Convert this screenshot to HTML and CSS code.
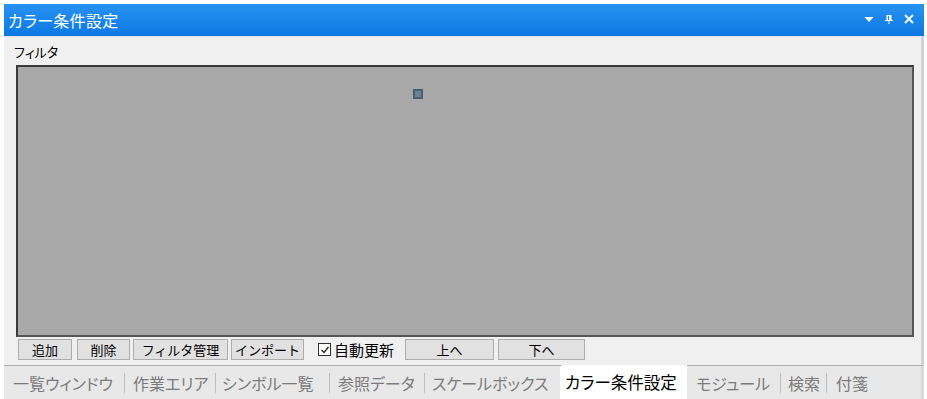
FILE: index.html
```html
<!DOCTYPE html>
<html lang="ja">
<head>
  <meta charset="UTF-8">
  <meta name="viewport" content="width=device-width, initial-scale=1.0">
  <title>カラー条件設定</title>
  <link rel="stylesheet" href="styles.css">
</head>
<body>

  <div class="window">

    <div class="titlebar">
      <span class="title">カラー条件設定</span>
      <div class="title-tools">
        <svg class="tool" width="10" height="10" viewBox="0 0 10 10">
          <path d="M0.5 3 L9.5 3 L5 8 Z" fill="#fff"/>
        </svg>
        <svg class="tool" width="10" height="10" viewBox="0 0 10 10">
          <path d="M2.5 1 H7.5 V6 H9 V7 H5.5 V10 H4.5 V7 H1 V6 H2.5 Z M4 2 V6 H5 V2 Z" fill="#fff" fill-rule="evenodd"/>
        </svg>
        <svg class="tool" width="10" height="10" viewBox="0 0 10 10">
          <path d="M1 1 L9 9 M9 1 L1 9" stroke="#fff" stroke-width="1.8"/>
        </svg>
      </div>
    </div>

    <div class="panel">
      <div class="group-label">フィルタ</div>
      <div class="filter-view">
        <span class="marker"></span>
      </div>
      <div class="toolbar">
        <button class="btn btn-add">追加</button>
        <button class="btn btn-del">削除</button>
        <button class="btn btn-manage">フィルタ管理</button>
        <button class="btn btn-import">インポート</button>
        <label class="check">
          <span class="check-box">
            <svg width="10" height="10" viewBox="0 0 10 10">
              <path d="M1.5 5 L4 7.5 L8.5 2" fill="none" stroke="#222" stroke-width="1.3"/>
            </svg>
          </span>
          自動更新
        </label>
        <button class="btn btn-up">上へ</button>
        <button class="btn btn-down">下へ</button>
      </div>
    </div>

    <div class="tabs">
      <span class="tab tab-list">一覧ウィンドウ</span>
      <span class="sep"></span>
      <span class="tab tab-work">作業エリア</span>
      <span class="sep"></span>
      <span class="tab tab-symbol">シンボル一覧</span>
      <span class="sep"></span>
      <span class="tab tab-ref">参照データ</span>
      <span class="sep"></span>
      <span class="tab tab-scale">スケールボックス</span>
      <span class="tab active">カラー条件設定</span>
      <span class="tab tab-module">モジュール</span>
      <span class="sep"></span>
      <span class="tab tab-search">検索</span>
      <span class="sep"></span>
      <span class="tab tab-note">付箋</span>
    </div>

  </div>

</body>
</html>
```

FILE: styles.css
```css
:root {
  --title-top: #2893f1;
  --title-bottom: #0c78e3;
  --panel-color: #f0f0f0;
  --view-color: #a8a8a8;
  --tab-strip: #e8e8e8;
  --tab-text: #7b7b7b;
  --button-color: #e1e1e1;
  --button-border: #adadad;
}
body {
  margin: 0;
  background-color: #fff;
  font-family: "Noto Sans CJK JP", "Noto Sans", sans-serif;
  font-feature-settings: "palt";
  color: #000;
}
.window {
  width: 920px;
  margin: 4px 0 0 4px;
}
.titlebar {
  height: 32px;
  display: flex;
  align-items: center;
  justify-content: space-between;
  padding: 0 10px 0 4px;
  background: linear-gradient(var(--title-top), var(--title-bottom));
}
.title {
  color: #fff;
  font-size: 16px;
  letter-spacing: 0.3px;
}
.title-tools {
  display: flex;
  gap: 10px;
  margin-top: -2px;
}
.tool {
  display: block;
}
.panel {
  height: 329px;
  box-sizing: border-box;
  padding: 5px 7px 0 12px;
  background-color: var(--panel-color);
  border-top: 1px solid #e4e4e4;
  border-right: 3px solid #d2d2d2;
}
.group-label {
  font-size: 13px;
  line-height: 20px;
  margin: 0 0 3px -2px;
}
.filter-view {
  position: relative;
  height: 272px;
  box-sizing: border-box;
  background-color: var(--view-color);
  border: 2px solid #3a3a3a;
  border-right-color: #555;
  border-bottom-color: #555;
}
.marker {
  position: absolute;
  left: 395px;
  top: 22px;
  width: 6px;
  height: 6px;
  background-color: #6c8397;
  border: 2px solid #4a5e71;
}
.toolbar {
  display: flex;
  align-items: center;
  height: 21px;
  margin-top: 2px;
  padding-left: 2px;
}
.btn {
  height: 21px;
  padding: 0;
  margin-right: 4px;
  font-family: inherit;
  font-feature-settings: normal;
  font-size: 13px;
  line-height: 19px;
  background-color: var(--button-color);
  border: 1px solid var(--button-border);
  color: #000;
}
.btn-add { width: 54px; margin-right: 5px; }
.btn-del { width: 53px; margin-right: 3px; }
.btn-manage { width: 95px; margin-right: 3px; }
.btn-import { width: 73px; margin-right: 14px; }
.btn-up { width: 89px; margin-left: 11px; }
.btn-down { width: 87px; }
.check {
  display: flex;
  align-items: center;
  gap: 3px;
  font-size: 15px;
}
.check-box {
  width: 11px;
  height: 11px;
  display: flex;
  align-items: center;
  justify-content: center;
  background-color: #fff;
  border: 1px solid #333;
}
.tabs {
  height: 34px;
  display: flex;
  align-items: center;
  box-sizing: border-box;
  background-color: var(--tab-strip);
  border-top: 1px solid #a9a9a9;
  border-right: 3px solid #d8d8d8;
}
.tab {
  box-sizing: border-box;
  padding-left: 8px;
  font-size: 16px;
  color: var(--tab-text);
  white-space: nowrap;
  overflow: hidden;
}
.tab-list { width: 120px; padding-left: 9px; }
.tab-work { width: 90px; }
.tab-symbol { width: 113px; padding-left: 6px; }
.tab-ref { width: 94px; }
.tab-scale { width: 135px; padding-left: 7px; }
.tab-module { width: 93px; padding-left: 9px; }
.tab-search { width: 45px; padding-left: 7px; }
.tab-note { width: 60px; padding-left: 9px; }
.tab.active {
  width: 127px;
  align-self: stretch;
  display: flex;
  align-items: center;
  margin-top: -1px;
  padding-left: 5px;
  background-color: #fff;
  color: #000;
  font-size: 16.5px;
  border-top-left-radius: 3px;
}
.sep {
  width: 1px;
  height: 20px;
  background-color: #bcbcbc;
}
```
